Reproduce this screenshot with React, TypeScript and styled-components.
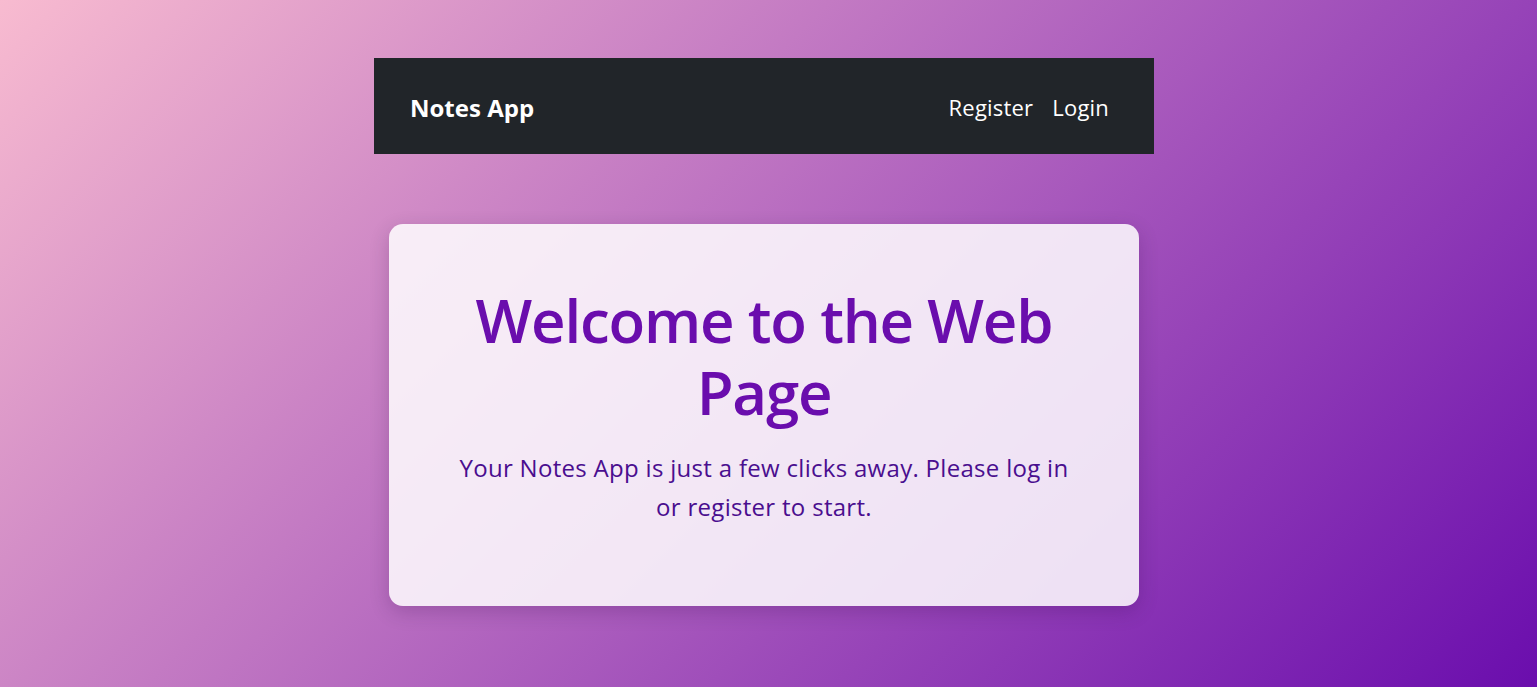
import React from "react";
import styled, { createGlobalStyle } from "styled-components";

const Global = createGlobalStyle`
  html, body { margin: 0; padding: 0; }
  body {
    font-family: "Open Sans", "Noto Sans", sans-serif;
    min-height: 687px;
    background: linear-gradient(135deg, #f8bbd0 0%, #6a0dad 100%);
    background-attachment: fixed;
  }
  * { box-sizing: border-box; }
`;

const Page = styled.div`
  min-height: 687px;
  padding: 58px 9px 0 0;
  display: flex;
  flex-direction: column;
  align-items: center;
`;

const NavBar = styled.nav`
  width: 780px;
  height: 96px;
  background: #212529;
  display: flex;
  align-items: center;
  justify-content: space-between;
  padding: 2px 45px 0 36px;
`;

const Brand = styled.a`
  color: #fff;
  font-weight: 700;
  font-size: 24px;
  text-decoration: none;
`;

const Links = styled.div`
  display: flex;
  gap: 19px;
`;

const NavLink = styled.a`
  color: #fff;
  font-size: 22px;
  letter-spacing: 0.2px;
  text-decoration: none;
`;

const Card = styled.section`
  margin-top: 70px;
  width: 750px;
  height: 382px;
  border-radius: 14px;
  background: rgba(255, 255, 255, 0.85);
  box-shadow: 0 6px 20px rgba(40, 0, 60, 0.2);
  padding: 60px 60px;
  text-align: center;
  display: flex;
  flex-direction: column;
  align-items: center;
`;

const Title = styled.h1`
  margin: 0 0 21px;
  color: #6a0dad;
  font-size: 60px;
  font-weight: 600;
  line-height: 1.2;
  letter-spacing: -1.2px;
`;

const Lead = styled.p`
  margin: 0;
  max-width: 622px;
  color: #4a0e8f;
  font-size: 24px;
  line-height: 1.62;
  letter-spacing: 0.3px;
`;

export default function App() {
  return (
    <>
      <Global />
      <Page>
        <NavBar>
          <Brand href="#">Notes App</Brand>
          <Links>
            <NavLink href="#">Register</NavLink>
            <NavLink href="#">Login</NavLink>
          </Links>
        </NavBar>
        <Card>
          <Title>Welcome to the Web Page</Title>
          <Lead>
            Your Notes App is just a few clicks away. Please log in or register to start.
          </Lead>
        </Card>
      </Page>
    </>
  );
}
